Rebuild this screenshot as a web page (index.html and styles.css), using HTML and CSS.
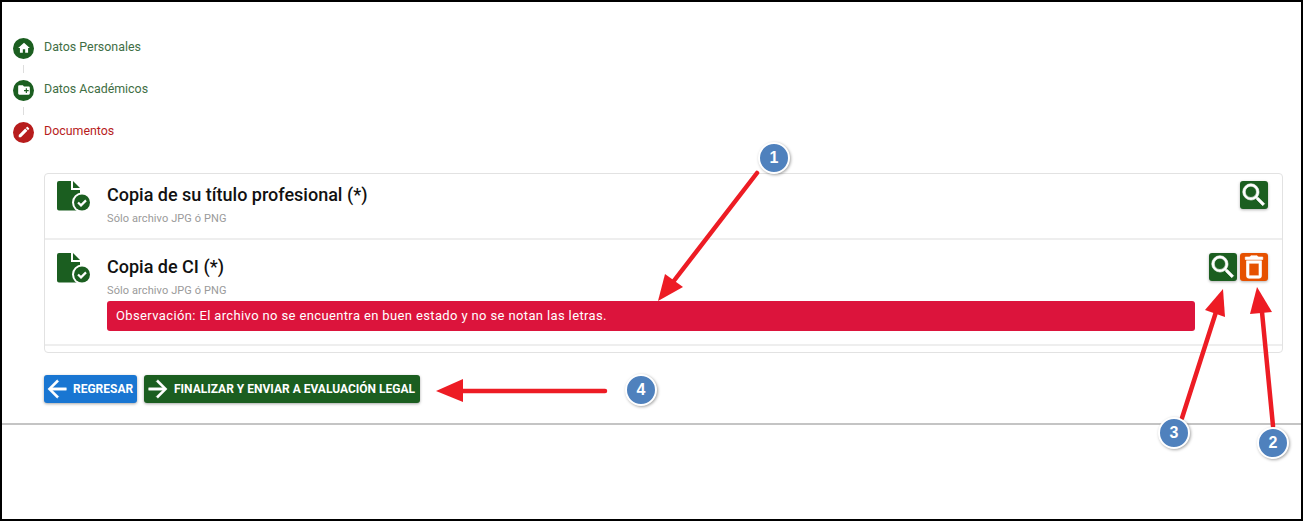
FILE: index.html
```html
<!DOCTYPE html>
<html lang="es">

<head>
    <meta charset="UTF-8">
    <title>Documentos</title>
    <link rel="stylesheet" href="styles.css">
</head>

<body>
    <div class="frame">
        <!-- Stepper -->
        <div class="stepper">
            <div class="step">
                <span class="step-icon done"><svg viewBox="0 0 24 24"><path d="M10,20V14H14V20H19V12H22L12,3L2,12H5V20H10Z"/></svg></span>
                <span class="step-label">Datos Personales</span>
            </div>
            <div class="step-line"></div>
            <div class="step">
                <span class="step-icon done"><svg viewBox="0 0 24 24"><path d="M10,4H4C2.89,4 2,4.89 2,6V18A2,2 0 0,0 4,20H20A2,2 0 0,0 22,18V8C22,6.89 21.1,6 20,6H12L10,4M15,9H17V12H20V14H17V17H15V14H12V12H15V9Z"/></svg></span>
                <span class="step-label">Datos Académicos</span>
            </div>
            <div class="step-line"></div>
            <div class="step current">
                <span class="step-icon error"><svg viewBox="0 0 24 24"><path d="M20.71,7.04C21.1,6.65 21.1,6 20.71,5.63L18.37,3.29C18,2.9 17.35,2.9 16.96,3.29L15.12,5.12L18.87,8.87M3,17.25V21H6.75L17.81,9.93L14.06,6.18L3,17.25Z"/></svg></span>
                <span class="step-label">Documentos</span>
            </div>
        </div>

        <!-- Documents -->
        <div class="card">
            <div class="doc-row first">
                <svg class="file-icon" viewBox="0 0 33 30"><path class="file-body" d="M2,0H14V9H23V29.5H2A2,2 0 0,1 0,27.5V2A2,2 0 0,1 2,0Z"/><path class="file-body" d="M16,0L23,7H16Z"/><circle class="ring" cx="25" cy="21.5" r="10"/><circle class="file-body" cx="25" cy="21.5" r="8"/><path class="check" d="M21,21.5L24,24.4L29,19.4"/></svg>
                <div class="doc-text">
                    <h3>Copia de su título profesional (*)</h3>
                    <p class="hint">Sólo archivo JPG ó PNG</p>
                </div>
                <div class="actions">
                    <button class="icon-btn green"><svg viewBox="0 0 24 24"><path d="M9.5,3A6.5,6.5 0 0,1 16,9.5C16,11.11 15.41,12.59 14.44,13.73L14.71,14H15.5L20.5,19L19,20.5L14,15.5V14.71L13.73,14.44C12.59,15.41 11.11,16 9.5,16A6.5,6.5 0 0,1 3,9.5A6.5,6.5 0 0,1 9.5,3M9.5,5C7,5 5,7 5,9.5C5,12 7,14 9.5,14C12,14 14,12 14,9.5C14,7 12,5 9.5,5Z"/></svg></button>
                </div>
            </div>
            <div class="doc-row second">
                <svg class="file-icon" viewBox="0 0 33 30"><path class="file-body" d="M2,0H14V9H23V29.5H2A2,2 0 0,1 0,27.5V2A2,2 0 0,1 2,0Z"/><path class="file-body" d="M16,0L23,7H16Z"/><circle class="ring" cx="25" cy="21.5" r="10"/><circle class="file-body" cx="25" cy="21.5" r="8"/><path class="check" d="M21,21.5L24,24.4L29,19.4"/></svg>
                <div class="doc-text">
                    <h3>Copia de CI (*)</h3>
                    <p class="hint">Sólo archivo JPG ó PNG</p>
                    <div class="alert">Observación: El archivo no se encuentra en buen estado y no se notan las letras.</div>
                </div>
                <div class="actions">
                    <button class="icon-btn green"><svg viewBox="0 0 24 24"><path d="M9.5,3A6.5,6.5 0 0,1 16,9.5C16,11.11 15.41,12.59 14.44,13.73L14.71,14H15.5L20.5,19L19,20.5L14,15.5V14.71L13.73,14.44C12.59,15.41 11.11,16 9.5,16A6.5,6.5 0 0,1 3,9.5A6.5,6.5 0 0,1 9.5,3M9.5,5C7,5 5,7 5,9.5C5,12 7,14 9.5,14C12,14 14,12 14,9.5C14,7 12,5 9.5,5Z"/></svg></button>
                    <button class="icon-btn orange"><svg viewBox="0 0 24 24"><path d="M6,19A2,2 0 0,0 8,21H16A2,2 0 0,0 18,19V7H6V19M8,9H16V19H8V9M15.5,4L14.5,3H9.5L8.5,4H5V6H19V4H15.5Z"/></svg></button>
                </div>
            </div>
        </div>

        <!-- Buttons -->
        <div class="buttons">
            <button class="btn blue"><svg viewBox="0 0 24 24"><path d="M20,11V13H8L13.5,18.5L12.08,19.92L4.16,12L12.08,4.08L13.5,5.5L8,11H20Z"/></svg>Regresar</button>
            <button class="btn green"><svg viewBox="0 0 24 24"><path d="M4,11V13H16L10.5,18.5L11.92,19.92L19.84,12L11.92,4.08L10.5,5.5L16,11H4Z"/></svg>Finalizar y enviar a evaluación legal</button>
        </div>
        <div class="rule"></div>

        <!-- Annotations drawn over the page -->
        <svg class="marks" viewBox="0 0 1303 521">
            <path class="arrow-line" d="M757,173L673,282"/>
            <path class="arrow-head" d="M658,301L665,274L683,287Z"/>
            <path class="arrow-line" d="M1273,426L1262,312"/>
            <path class="arrow-head" d="M1257,287L1250,314L1272,312Z"/>
            <path class="arrow-line" d="M1182,418L1216,312"/>
            <path class="arrow-head" d="M1223,289L1205,310L1225,317Z"/>
            <path class="arrow-line" d="M605,391H462"/>
            <path class="arrow-head" d="M436,391L463,379V402Z"/>
        </svg>
        <span class="badge one">1</span>
        <span class="badge two">2</span>
        <span class="badge three">3</span>
        <span class="badge four">4</span>
    </div>
</body>

</html>
```

FILE: styles.css
```css
* {
    box-sizing: border-box;
}

html,
body {
    margin: 0;
    padding: 0;
    background: #fff;
}

body {
    font-family: Roboto, "Liberation Sans", sans-serif;
    overflow: hidden;
}

.frame {
    position: relative;
    width: 1303px;
    height: 521px;
    border: 2px solid #000;
    overflow: hidden;
    background: #fff;
}

/* stepper */
.stepper {
    padding: 35px 0 0 11px;
}

.step {
    display: flex;
    align-items: center;
    height: 22px;
    gap: 10px;
    font-size: 12.4px;
    color: #3f6e44;
}

.step.current {
    color: #b71c1c;
}

.step-label {
    padding-bottom: 3px;
}

.step-icon {
    width: 21px;
    height: 21px;
    border-radius: 50%;
    display: flex;
    align-items: center;
    justify-content: center;
}

.step-icon svg {
    width: 14px;
    height: 14px;
    fill: #fff;
}

.step-icon.done {
    background: #1b5e20;
}

.step-icon.error {
    background: #b71c1c;
}

.step-line {
    width: 1px;
    height: 8px;
    margin: 6px 0 6px 10px;
    background: #ddd;
}

/* card */
.card {
    margin: 30px 18px 0 42px;
    height: 180px;
    border: 1px solid #e2e2e2;
    border-radius: 4px;
}

.doc-row {
    display: flex;
    padding-left: 12px;
    padding-right: 14px;
    border-bottom: 2px solid #eee;
}

.doc-row.first {
    height: 66px;
    padding-top: 7px;
}

.doc-row.second {
    height: 106px;
    padding-top: 13px;
}

.file-icon {
    width: 33px;
    height: 30px;
    flex: none;
}

.file-body {
    fill: #1b5e20;
}

.ring {
    fill: #fff;
}

.check {
    fill: none;
    stroke: #fff;
    stroke-width: 2.2;
}

.doc-text {
    flex: 1;
    margin-left: 17px;
    min-width: 0;
}

.doc-text h3 {
    margin: 4px 0 0;
    font-size: 18px;
    line-height: 20px;
    font-weight: 500;
    color: #111;
}

.hint {
    margin: 7px 0 0;
    font-size: 11px;
    line-height: 14px;
    color: #9a9a9a;
    letter-spacing: 0.1px;
}

.alert {
    width: 1088px;
    height: 30px;
    margin-top: 3px;
    padding-left: 9px;
    border-radius: 3px;
    background: #dc143c;
    color: #fff;
    font-size: 13px;
    line-height: 30px;
    letter-spacing: 0.37px;
}

.actions {
    display: flex;
    gap: 3px;
    flex: none;
    position: relative;
    width: 0;
    justify-content: flex-end;
}

.icon-btn {
    flex: none;
    width: 28px;
    height: 28px;
    padding: 0;
    border: none;
    border-radius: 3px;
    display: flex;
    align-items: center;
    justify-content: center;
    box-shadow: 0 1px 3px rgba(0, 0, 0, 0.3);
}

.icon-btn svg {
    flex: none;
    width: 30px;
    height: 30px;
    fill: #fff;
    stroke: #fff;
    stroke-width: 0.5;
}

.icon-btn.green {
    background: #1b5e20;
}

.icon-btn.orange {
    background: #e65100;
}

/* bottom buttons */
.buttons {
    display: flex;
    gap: 7px;
    margin: 22px 0 0 42px;
}

.btn {
    display: flex;
    align-items: center;
    height: 28px;
    border: none;
    border-radius: 3px;
    padding: 0;
    color: #fff;
    font-family: inherit;
    font-size: 12px;
    font-weight: 700;
    white-space: nowrap;
    text-transform: uppercase;
    box-shadow: 0 1px 3px rgba(0, 0, 0, 0.35);
}

.btn svg {
    flex: none;
    width: 28px;
    height: 28px;
    fill: #fff;
    stroke: #fff;
    stroke-width: 0.4;
    margin: 0 2px 0 0;
}

.btn.blue {
    background: #1976d2;
    width: 93px;
}

.btn.blue svg {
    margin-left: -1px;
}

.btn.green {
    background: #1b5e20;
    width: 276px;
}

.rule {
    height: 2px;
    margin-top: 20px;
    background: #c4c4c4;
}

/* annotations */
.marks {
    position: absolute;
    left: -2px;
    top: -2px;
    width: 1303px;
    height: 521px;
}

.arrow-line {
    fill: none;
    stroke: #ed1c24;
    stroke-width: 4.5;
    stroke-linecap: round;
}

.arrow-head {
    fill: #ed1c24;
}

.badge {
    position: absolute;
    width: 32px;
    height: 32px;
    border: 2px solid #fff;
    border-radius: 50%;
    background: #4f81bd;
    color: #fff;
    font-family: "Liberation Sans", sans-serif;
    font-size: 16px;
    font-weight: 700;
    line-height: 28px;
    text-align: center;
    box-shadow: 1px 1px 3px rgba(0, 0, 0, 0.35);
}

.badge.one {
    left: 756px;
    top: 140px;
}

.badge.two {
    left: 1255px;
    top: 425px;
}

.badge.three {
    left: 1156px;
    top: 415px;
}

.badge.four {
    left: 623px;
    top: 372px;
}
```
